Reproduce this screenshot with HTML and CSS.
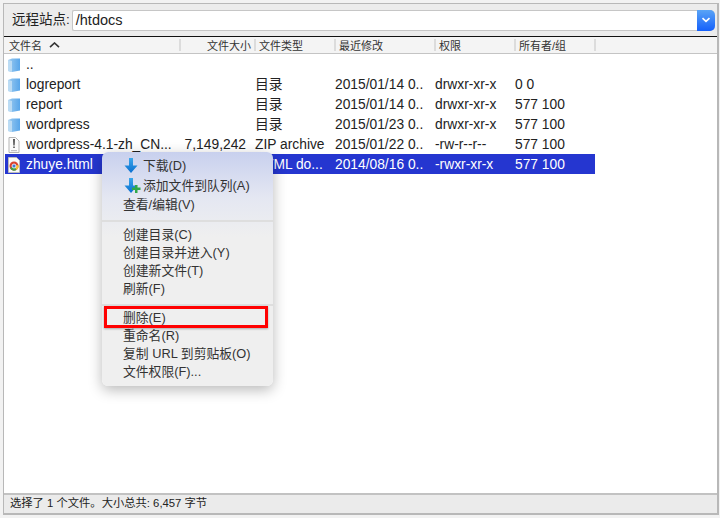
FILE: index.html
```html
<!DOCTYPE html>
<html lang="zh">
<head>
<meta charset="utf-8">
<title>远程站点</title>
<link rel="stylesheet" href="styles.css">
</head>
<body>
<div class="window">
  <div class="site-bar">
    <span class="site-label">远程站点:</span>
    <div class="combo">
      <span class="combo-value">/htdocs</span>
      <span class="combo-btn"><svg width="10" height="6" viewBox="0 0 10 6"><path d="M1.5 1.2 5 4.4 8.5 1.2" fill="none" stroke="#fff" stroke-width="1.7"/></svg></span>
    </div>
  </div>
  <div class="head row-grid">
    <div class="hc first">文件名<svg class="sort" width="11" height="6" viewBox="0 0 11 6"><path d="M1 5.2 5.500 1 10 5.2" fill="none" stroke="#333" stroke-width="1.6"/></svg></div>
    <div class="hc right">文件大小</div>
    <div class="hc">文件类型</div>
    <div class="hc">最近修改</div>
    <div class="hc">权限</div>
    <div class="hc">所有者/组</div>
  </div>
  <div class="list">
    <div class="row row-grid">
      <div class="name"><svg class="ico" width="16" height="16" viewBox="0 0 16 16"><use href="#folder"/></svg>..</div><div></div><div></div><div></div><div></div><div></div>
    </div>
    <div class="row row-grid">
      <div class="name"><svg class="ico" width="16" height="16" viewBox="0 0 16 16"><use href="#folder"/></svg>logreport</div><div></div><div>目录</div><div>2015/01/14 0..</div><div>drwxr-xr-x</div><div>0 0</div>
    </div>
    <div class="row row-grid">
      <div class="name"><svg class="ico" width="16" height="16" viewBox="0 0 16 16"><use href="#folder"/></svg>report</div><div></div><div>目录</div><div>2015/01/14 0..</div><div>drwxr-xr-x</div><div>577 100</div>
    </div>
    <div class="row row-grid">
      <div class="name"><svg class="ico" width="16" height="16" viewBox="0 0 16 16"><use href="#folder"/></svg>wordpress</div><div></div><div>目录</div><div>2015/01/23 0..</div><div>drwxr-xr-x</div><div>577 100</div>
    </div>
    <div class="row row-grid">
      <div class="name"><svg class="ico" width="16" height="16" viewBox="0 0 16 16"><path d="M3 .5h6.500l3.500 3.500v11.500H3z" fill="#fbfbfb" stroke="#b5b5b5"/><path d="M7 2h2l-.3 6.500H7.300z" fill="#555"/><path d="M7.200 9.500h1.600V11H7.200z" fill="#555"/><path d="M5 13h6v1.200H5z" fill="#c4c4c4"/></svg>wordpress-4.1-zh_CN...</div><div class="right size">7,149,242</div><div>ZIP archive</div><div>2015/01/22 0..</div><div>-rw-r--r--</div><div>577 100</div>
    </div>
    <div class="row row-grid selected">
      <div class="name"><svg class="ico" width="16" height="16" viewBox="0 0 16 16"><path d="M2.500.5h8l3 3v12h-11z" fill="#fafafa" stroke="#bbb"/><circle cx="8" cy="9" r="4.500" fill="#d9432f"/><path d="M8 9 4 11a4.500 4.500 0 0 0 6.500 2z" fill="#3fa14a"/><path d="M8 9l2.500 4a4.500 4.500 0 0 0 2-5z" fill="#f2c230"/><circle cx="8" cy="9" r="2" fill="#3a78d8" stroke="#fff" stroke-width=".8"/></svg>zhuye.html</div><div></div><div>HTML do...</div><div>2014/08/16 0..</div><div>-rwxr-xr-x</div><div>577 100</div>
    </div>
  </div>
  <div class="status">选择了 1 个文件。大小总共: 6,457 字节</div>
</div>

<div class="menu">
  <div class="item has-icon"><svg class="mi" width="18" height="18" viewBox="0 0 18 18"><use href="#down"/></svg>下载(D)</div>
  <div class="item has-icon"><svg class="mi" width="20" height="18" viewBox="0 0 20 18"><use href="#down"/><path d="M10 10.500h3V8h2.500v2.500h3V13h-3v3H13v-3h-3z" fill="#2fa84a"/></svg>添加文件到队列(A)</div>
  <div class="item">查看/编辑(V)</div>
  <div class="sep"></div>
  <div class="item">创建目录(C)</div>
  <div class="item">创建目录并进入(Y)</div>
  <div class="item">创建新文件(T)</div>
  <div class="item">刷新(F)</div>
  <div class="sep tall"></div>
  <div class="item">删除(E)</div>
  <div class="item">重命名(R)</div>
  <div class="item">复制 URL 到剪贴板(O)</div>
  <div class="item">文件权限(F)...</div>
</div>
<div class="highlight"></div>

<svg class="defs" width="0" height="0">
  <defs>
    <linearGradient id="fg" x1="0" y1="0" x2="1" y2="0"><stop offset="0" stop-color="#9ccbf0"/><stop offset="1" stop-color="#58a6ea"/></linearGradient>
    <linearGradient id="dg" x1="0" y1="0" x2="0" y2="1"><stop offset="0" stop-color="#3aa6ea"/><stop offset="1" stop-color="#0a6fd0"/></linearGradient>
    <symbol id="folder" viewBox="0 0 16 16"><path d="M2 3 6 1.500h8V13.500L6 15l-4-1z" fill="url(#fg)"/><path d="M2 3l4 1v11l-4-1z" fill="#bcdcf4"/></symbol>
    <symbol id="down" viewBox="0 0 18 18" width="18" height="18"><path d="M7 1h4v7.500h4.500L9 16 2.500 8.500H7z" fill="url(#dg)"/></symbol>
  </defs>
</svg>
</body>
</html>
```
FILE: styles.css
```css
* { box-sizing: border-box; }
html, body { margin: 0; height: 518px; overflow: hidden; }
body {
  background: #f2f2f2;
  padding: 3px 1px 3px 3px;
  font: 13.800px/20px "Liberation Sans", "Noto Sans CJK SC", sans-serif;
  color: #222;
  position: relative;
}
.window {
  height: 512px;
  border: 1px solid #b8b8b8;
  border-width: 1px 2px 2px 1px;
  display: flex;
  flex-direction: column;
  background: #fff;
}
.site-bar {
  height: 33px;
  flex: none;
  background: #ececec;
  border-bottom: 1px solid #111;
  display: flex;
  align-items: center;
  padding: 0 0 0 8px;
  gap: 2px;
}
.site-label { font-size: 13.500px; color: #222; }
.combo {
  flex: 1;
  height: 21px;
  margin-right: 2px;
  background: #fff;
  border: 1px solid #c6c6c6;
  border-right: 0;
  border-radius: 2px 5px 5px 2px;
  display: flex;
  align-items: center;
}
.combo-value { flex: 1; padding-left: 3px; font-size: 14.500px; }
.combo-btn {
  width: 18px;
  height: 21px;
  border-radius: 0 5px 5px 0;
  background: linear-gradient(#5aa4f6, #1560fb);
  display: flex;
  align-items: center;
  justify-content: center;
}
.row-grid {
  display: grid;
  grid-template-columns: 175px 75px 80px 100px 80px 80px;
}
.head {
  height: 17px;
  flex: none;
  background: #f4f4f4;
  border-bottom: 1px solid #c4c4c4;
  grid-template-columns: 177px 75px 80px 100px 80px 80px;
  font-size: 11px;
  color: #333;
}
.hc {
  height: 12px;
  margin-top: 2px;
  line-height: 15px;
  padding-left: 3px;
  border-right: 2px solid #dcdcdc;
  white-space: nowrap;
}
.hc.first { padding-left: 5px; }
.hc.right { text-align: right; padding: 0 3px 0 0; }
.sort { margin-left: 7px; vertical-align: 2px; }
.list { flex: 1; padding-left: 1px; }
.row { width: 590px; height: 20px; line-height: 21px; white-space: nowrap; }
.name { display: flex; align-items: center; gap: 4px; }
.ico { flex: none; margin-left: 1px; }
.right { text-align: right; }
.size { padding-right: 9px; }
.selected {
  background: #2536d0;
  color: #fff;
  font-weight: 500;
}
.status {
  height: 20px;
  flex: none;
  background: #ebebeb;
  border-top: 2px solid #c2c2c2;
  padding-left: 6px;
  font-size: 11.300px;
  line-height: 16px;
}
.menu {
  position: absolute;
  left: 102px;
  top: 152px;
  width: 171px;
  height: 234px;
  padding-top: 4px;
  border-radius: 6px;
  background: linear-gradient(#c8d0ee 0, #e4e7f2 45px, #efefef 85px);
  box-shadow: 0 4px 14px rgba(0, 0, 0, .28);
  font-size: 12.800px;
  color: #333;
}
.item {
  height: 18px;
  line-height: 18px;
  padding-left: 21px;
  white-space: nowrap;
}
.item.has-icon { position: relative; padding-left: 41px; height: 20px; line-height: 20px; }
.mi { position: absolute; left: 20px; top: 1px; }
.sep { height: 2px; margin: 6px 0 4px; background: #dedede; }
.sep.tall { margin: 6px 0 3px; }
.highlight {
  position: absolute;
  left: 104px;
  top: 306px;
  width: 164px;
  height: 22px;
  border: 3px solid #f00;
  box-shadow: 0 1px 2px rgba(0,0,0,.3);
}
.defs { position: absolute; }
```
